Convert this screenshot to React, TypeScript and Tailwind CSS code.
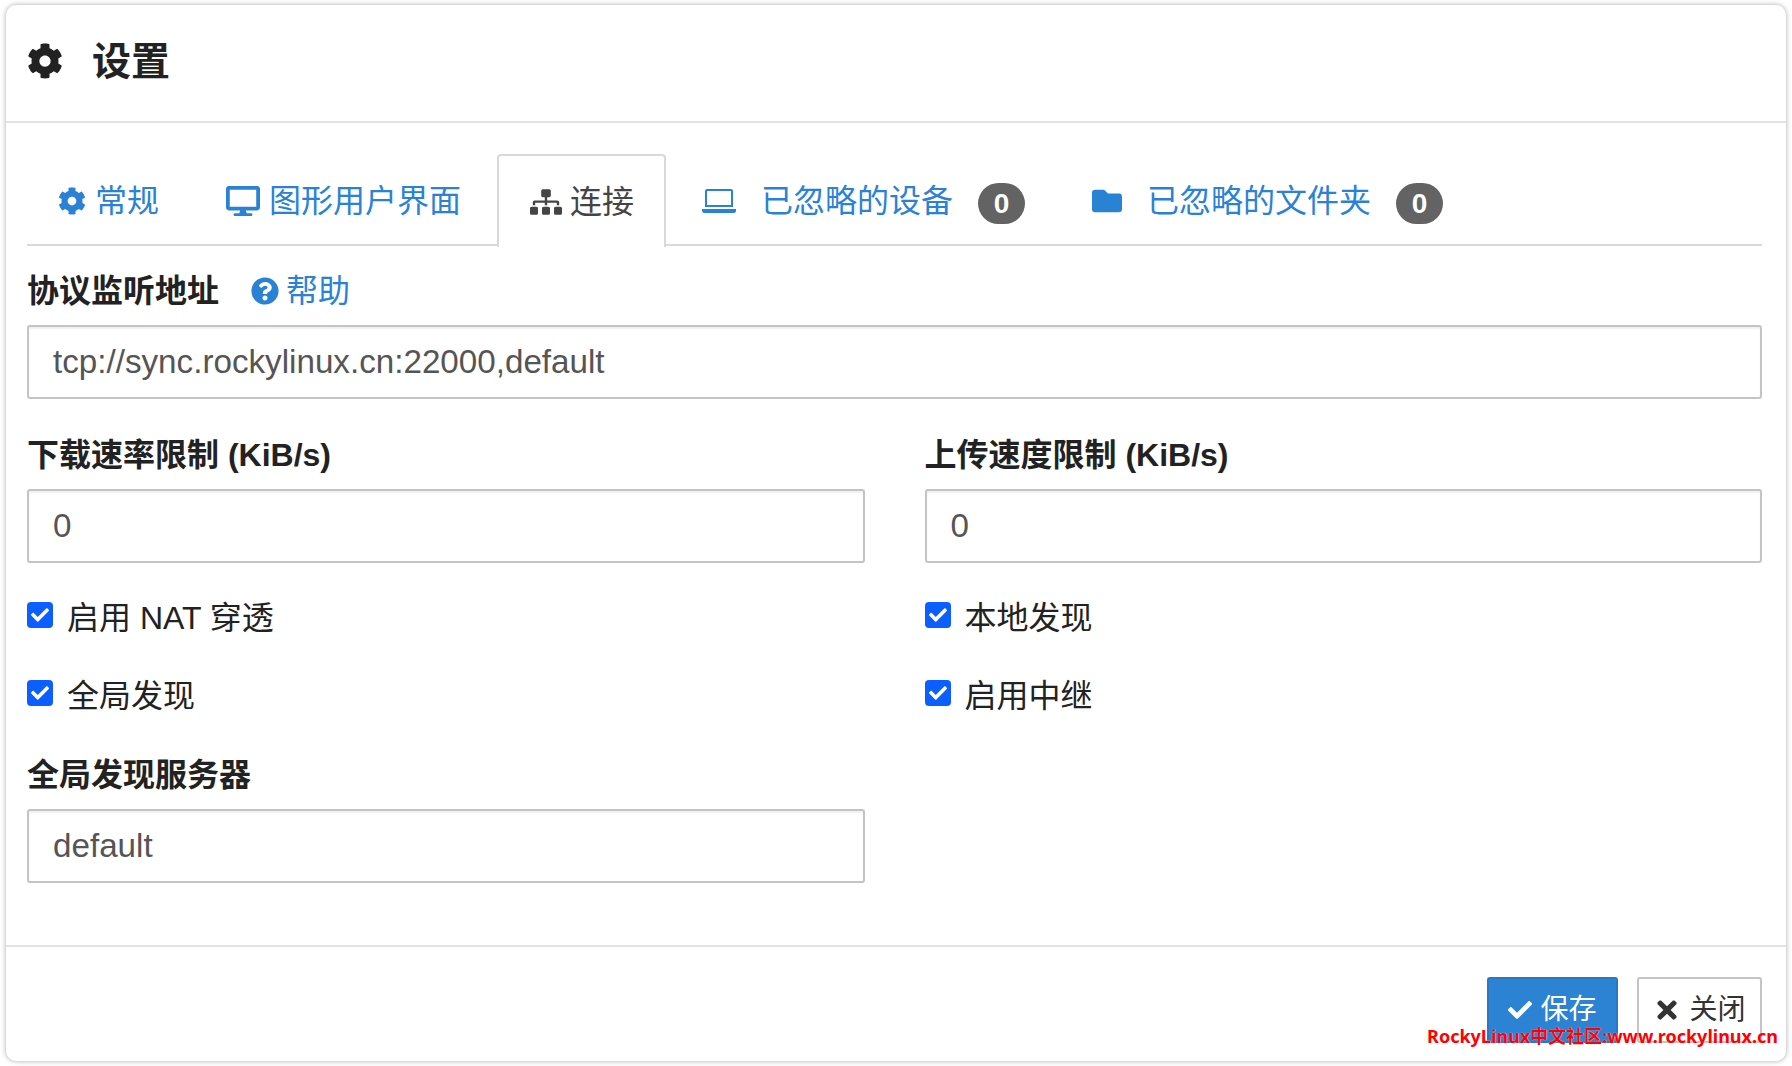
import { FaCheck, FaCog, FaDesktop, FaFolder, FaQuestionCircle, FaSitemap, FaTimes } from 'react-icons/fa';

const font = "font-['Liberation_Sans','Noto_Sans_CJK_SC',sans-serif]";

function Laptop() {
  return (
    <svg viewBox="0 0 34 26" className="h-[26px] w-[34px]" fill="currentColor">
      <path d="M5 1h24a2 2 0 0 1 2 2v15h-2V3H5v15H3V3a2 2 0 0 1 2-2z" />
      <rect x="3" y="17" width="28" height="2" />
      <path d="M0 21h34v1.5a2.5 2.5 0 0 1-2.5 2.5h-29A2.5 2.5 0 0 1 0 22.500z" />
    </svg>
  );
}

function Badge() {
  return (
    <span className="relative top-[3px] ml-[25px] flex h-[41px] w-[47px] items-center justify-center rounded-full bg-[#636363] text-[28px] font-bold text-white">
      0
    </span>
  );
}

function Tab({ children, active, gap }: { children: React.ReactNode; active?: boolean; gap?: boolean }) {
  if (active) {
    return (
      <div className="relative -mb-[2px] mr-[4px] flex h-[93px] items-center rounded-t-[4px] border-2 border-b-0 border-[#d9d9d9] bg-white px-[30px] text-[#444]">
        {children}
      </div>
    );
  }
  return (
    <div className={`${gap ? 'mr-[5px]' : 'mr-[4px]'} flex h-[91px] items-center px-[31px] pt-[2px] text-[#2a82d4]`}>
      {children}
    </div>
  );
}

function TextField({ value }: { value: string }) {
  return (
    <div className="flex h-[74px] items-center rounded-[3px] border-2 border-[#c4c4c4] bg-white px-[24px] text-[33.2px] text-[#555] shadow-[inset_0_2px_2px_rgba(0,0,0,0.06)]">
      {value}
    </div>
  );
}

function Check({ label }: { label: string }) {
  return (
    <div className="flex h-[26px] items-center gap-[14px] text-[#222]">
      <span className="flex h-[26px] w-[26px] items-center justify-center rounded-[4px] bg-[#0b5fff] text-[18px] text-white">
        <FaCheck />
      </span>
      <span className="relative top-[3px]">{label}</span>
    </div>
  );
}

export default function App() {
  return (
    <div className={`h-[1066px] bg-white px-[6px] py-[5px] text-[32px] leading-none ${font}`}>
      <div className="relative flex h-[1056px] flex-col overflow-hidden rounded-[10px] bg-white shadow-[0_0_5px_rgba(0,0,0,0.35)]">
        <div className="flex h-[118px] shrink-0 items-center border-b-2 border-[#e3e3e3] pb-[4px] pl-[21px] text-[39px] font-bold text-[#222]">
          <FaCog className="mr-[29px] text-[36px]" />
          <span>设置</span>
        </div>

        <div className="flex grow flex-col pl-[21px] pr-[24px]">
          <div className="mt-[31px] flex h-[92px] shrink-0 border-b-2 border-[#d9d9d9]">
            <Tab gap>
              <FaCog className="mr-[9px] text-[28px]" />
              常规
            </Tab>
            <Tab gap>
              <FaDesktop className="mr-[9px] text-[34px]" />
              图形用户界面
            </Tab>
            <Tab active>
              <FaSitemap className="ml-[1px] mr-[8px] text-[32px]" />
              连接
            </Tab>
            <Tab>
              <span className="ml-[1px] mr-[25px]">
                <Laptop />
              </span>
              已忽略的设备
              <Badge />
            </Tab>
            <Tab>
              <FaFolder className="ml-[1px] mr-[25px] text-[30px]" />
              已忽略的文件夹
              <Badge />
            </Tab>
          </div>

          <div className="mt-[29px] flex h-[32px] items-center font-bold text-[#222]">
            协议监听地址
            <span className="ml-[32px] flex items-center font-normal text-[#2a82d4]">
              <FaQuestionCircle className="mr-[7px] text-[28px]" />
              帮助
            </span>
          </div>
          <div className="mt-[18px]">
            <TextField value="tcp://sync.rockylinux.cn:22000,default" />
          </div>

          <div className="mt-[40px] grid grid-cols-2 gap-x-[60px]">
            <div>
              <div className="h-[32px] font-bold text-[#222]">下载速率限制 (KiB/s)</div>
              <div className="mt-[18px]">
                <TextField value="0" />
              </div>
            </div>
            <div>
              <div className="h-[32px] font-bold text-[#222]">上传速度限制 (KiB/s)</div>
              <div className="mt-[18px]">
                <TextField value="0" />
              </div>
            </div>
          </div>

          <div className="mt-[39px] grid grid-cols-2 gap-x-[60px] gap-y-[52px]">
            <Check label="启用 NAT 穿透" />
            <Check label="本地发现" />
            <Check label="全局发现" />
            <Check label="启用中继" />
          </div>

          <div className="mt-[53px] grid grid-cols-2 gap-x-[60px]">
            <div>
              <div className="h-[32px] font-bold text-[#222]">全局发现服务器</div>
              <div className="mt-[18px]">
                <TextField value="default" />
              </div>
            </div>
          </div>
        </div>

        <div className="flex h-[116px] shrink-0 justify-end gap-[19px] border-t-2 border-[#e3e3e3] pr-[24px] pt-[30px] text-[28px]">
          <div className="flex h-[66px] w-[131px] items-center justify-center gap-[8px] rounded-[3px] border-2 border-[#2878c4] bg-[#2c82d3] text-white">
            <FaCheck className="text-[24px]" />
            保存
          </div>
          <div className="flex h-[66px] w-[125px] items-center justify-center gap-[8px] rounded-[3px] border-2 border-[#c4c4c4] bg-white text-[#333]">
            <FaTimes className="text-[28px]" />
            关闭
          </div>
        </div>

        <div className="absolute bottom-[16px] right-[8px] font-['Noto_Sans','Noto_Sans_CJK_SC',sans-serif] text-[18px] font-bold text-[#ff0000] [text-shadow:0_0_1px_#fff]">
          RockyLinux中文社区:www.rockylinux.cn
        </div>
      </div>
    </div>
  );
}
